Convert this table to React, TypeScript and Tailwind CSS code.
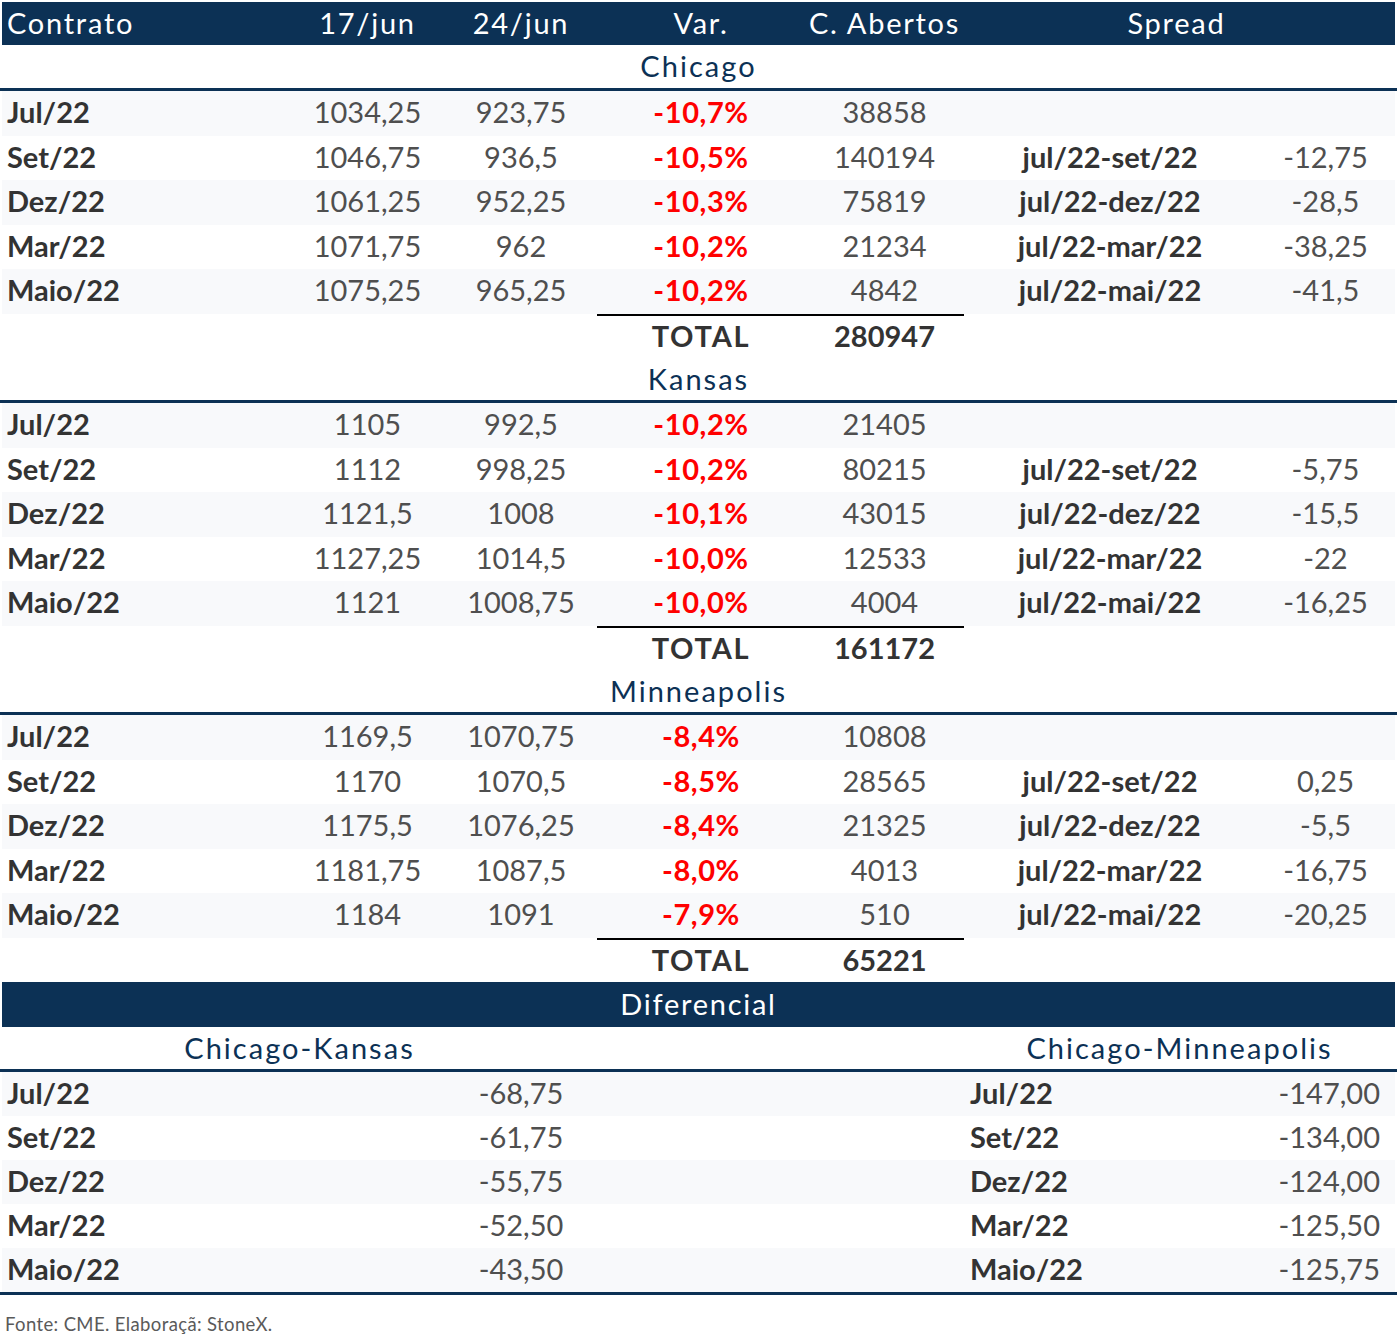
import React from "react";

type Row = { c: string; a: string; b: string; v: string; o: string; sl?: string; sv?: string };

const chicago: Row[] = [
  { c: "Jul/22", a: "1034,25", b: "923,75", v: "-10,7%", o: "38858" },
  { c: "Set/22", a: "1046,75", b: "936,5", v: "-10,5%", o: "140194", sl: "jul/22-set/22", sv: "-12,75" },
  { c: "Dez/22", a: "1061,25", b: "952,25", v: "-10,3%", o: "75819", sl: "jul/22-dez/22", sv: "-28,5" },
  { c: "Mar/22", a: "1071,75", b: "962", v: "-10,2%", o: "21234", sl: "jul/22-mar/22", sv: "-38,25" },
  { c: "Maio/22", a: "1075,25", b: "965,25", v: "-10,2%", o: "4842", sl: "jul/22-mai/22", sv: "-41,5" },
];
const kansas: Row[] = [
  { c: "Jul/22", a: "1105", b: "992,5", v: "-10,2%", o: "21405" },
  { c: "Set/22", a: "1112", b: "998,25", v: "-10,2%", o: "80215", sl: "jul/22-set/22", sv: "-5,75" },
  { c: "Dez/22", a: "1121,5", b: "1008", v: "-10,1%", o: "43015", sl: "jul/22-dez/22", sv: "-15,5" },
  { c: "Mar/22", a: "1127,25", b: "1014,5", v: "-10,0%", o: "12533", sl: "jul/22-mar/22", sv: "-22" },
  { c: "Maio/22", a: "1121", b: "1008,75", v: "-10,0%", o: "4004", sl: "jul/22-mai/22", sv: "-16,25" },
];
const minneapolis: Row[] = [
  { c: "Jul/22", a: "1169,5", b: "1070,75", v: "-8,4%", o: "10808" },
  { c: "Set/22", a: "1170", b: "1070,5", v: "-8,5%", o: "28565", sl: "jul/22-set/22", sv: "0,25" },
  { c: "Dez/22", a: "1175,5", b: "1076,25", v: "-8,4%", o: "21325", sl: "jul/22-dez/22", sv: "-5,5" },
  { c: "Mar/22", a: "1181,75", b: "1087,5", v: "-8,0%", o: "4013", sl: "jul/22-mar/22", sv: "-16,75" },
  { c: "Maio/22", a: "1184", b: "1091", v: "-7,9%", o: "510", sl: "jul/22-mai/22", sv: "-20,25" },
];

const diff = [
  { c: "Jul/22", k: "-68,75", m: "-147,00" },
  { c: "Set/22", k: "-61,75", m: "-134,00" },
  { c: "Dez/22", k: "-55,75", m: "-124,00" },
  { c: "Mar/22", k: "-52,50", m: "-125,50" },
  { c: "Maio/22", k: "-43,50", m: "-125,75" },
];

const GRID = "grid grid-cols-[288px_155px_152px_208px_159px_292px_139px] mx-[2px]";

function Block({ title, rows, total, titleH }: { title: string; rows: Row[]; total: string; titleH: string }) {
  return (
    <>
      <div className={`${titleH} flex items-center justify-center pb-[2px] text-[#0c3155] text-[29px] tracking-[0.07em]`}>{title}</div>
      <div className="h-[3px] bg-[#0c3155]" />
      {rows.map((r, i) => (
        <div key={i} className={`${GRID} h-[44.5px] items-center pb-[3px] ${i % 2 === 0 ? "bg-[#f8f9fb]" : "bg-white"}`}>
          <div className="pl-[5px] font-bold text-[#333333]">{r.c}</div>
          <div className="text-center text-[#4f4f4f]">{r.a}</div>
          <div className="text-center text-[#4f4f4f]">{r.b}</div>
          <div className="text-center font-bold text-[#ff0000] tracking-[0.02em]">{r.v}</div>
          <div className="text-center text-[#4f4f4f]">{r.o}</div>
          <div className="text-center font-bold text-[#333333]">{r.sl ?? ""}</div>
          <div className="text-center text-[#4f4f4f]">{r.sv ?? ""}</div>
        </div>
      ))}
      <div className={`${GRID} h-[44.5px]`}>
        <div className="col-start-4 col-span-2 border-t-2 border-black grid grid-cols-[208px_159px] items-center pb-[2px] font-bold text-[#333333]">
          <div className="text-center tracking-[0.06em]">TOTAL</div>
          <div className="text-center">{total}</div>
        </div>
      </div>
    </>
  );
}

export default function App() {
  return (
    <div className="w-[1397px] bg-white pt-[2px] font-['Lato','Noto_Sans',sans-serif] text-[29px] leading-none">
      <div className={`${GRID} h-[43px] items-center pb-[2px] bg-[#0c3155] text-white tracking-[0.06em]`}>
        <div className="pl-[5px]">Contrato</div>
        <div className="text-center">17/jun</div>
        <div className="text-center">24/jun</div>
        <div className="text-center">Var.</div>
        <div className="text-center">C. Abertos</div>
        <div className="col-span-2 text-center pr-[6px]">Spread</div>
      </div>
      <Block title="Chicago" rows={chicago} total="280947" titleH="h-[43px]" />
      <Block title="Kansas" rows={kansas} total="161172" titleH="h-[42px]" />
      <Block title="Minneapolis" rows={minneapolis} total="65221" titleH="h-[42px]" />
      <div className="mx-[2px] h-[45px] flex items-center justify-center pb-[2px] bg-[#0c3155] text-white tracking-[0.06em]">Diferencial</div>
      <div className={`${GRID} h-[42px] items-center pb-[2px] text-[#0c3155] tracking-[0.07em]`}>
        <div className="col-span-3 text-center">Chicago-Kansas</div>
        <div className="col-start-6 col-span-2 text-center">Chicago-Minneapolis</div>
      </div>
      <div className="h-[3px] bg-[#0c3155]" />
      {diff.map((r, i) => (
        <div key={i} className={`${GRID} h-[44px] items-center pb-[3px] ${i % 2 === 0 ? "bg-[#f8f9fb]" : "bg-white"}`}>
          <div className="pl-[5px] font-bold text-[#333333]">{r.c}</div>
          <div />
          <div className="text-center text-[#4f4f4f]">{r.k}</div>
          <div />
          <div />
          <div className="pl-[6px] font-bold text-[#333333]">{r.c}</div>
          <div className="text-right pr-[15px] text-[#4f4f4f]">{r.m}</div>
        </div>
      ))}
      <div className="h-[3px] bg-[#0c3155]" />
      <div className="pl-[5px] pt-[20px] pb-[8px] text-[18.5px] text-[#5a5a5a] tracking-[0.02em]">Fonte: CME. Elaboraçã: StoneX.</div>
    </div>
  );
}
